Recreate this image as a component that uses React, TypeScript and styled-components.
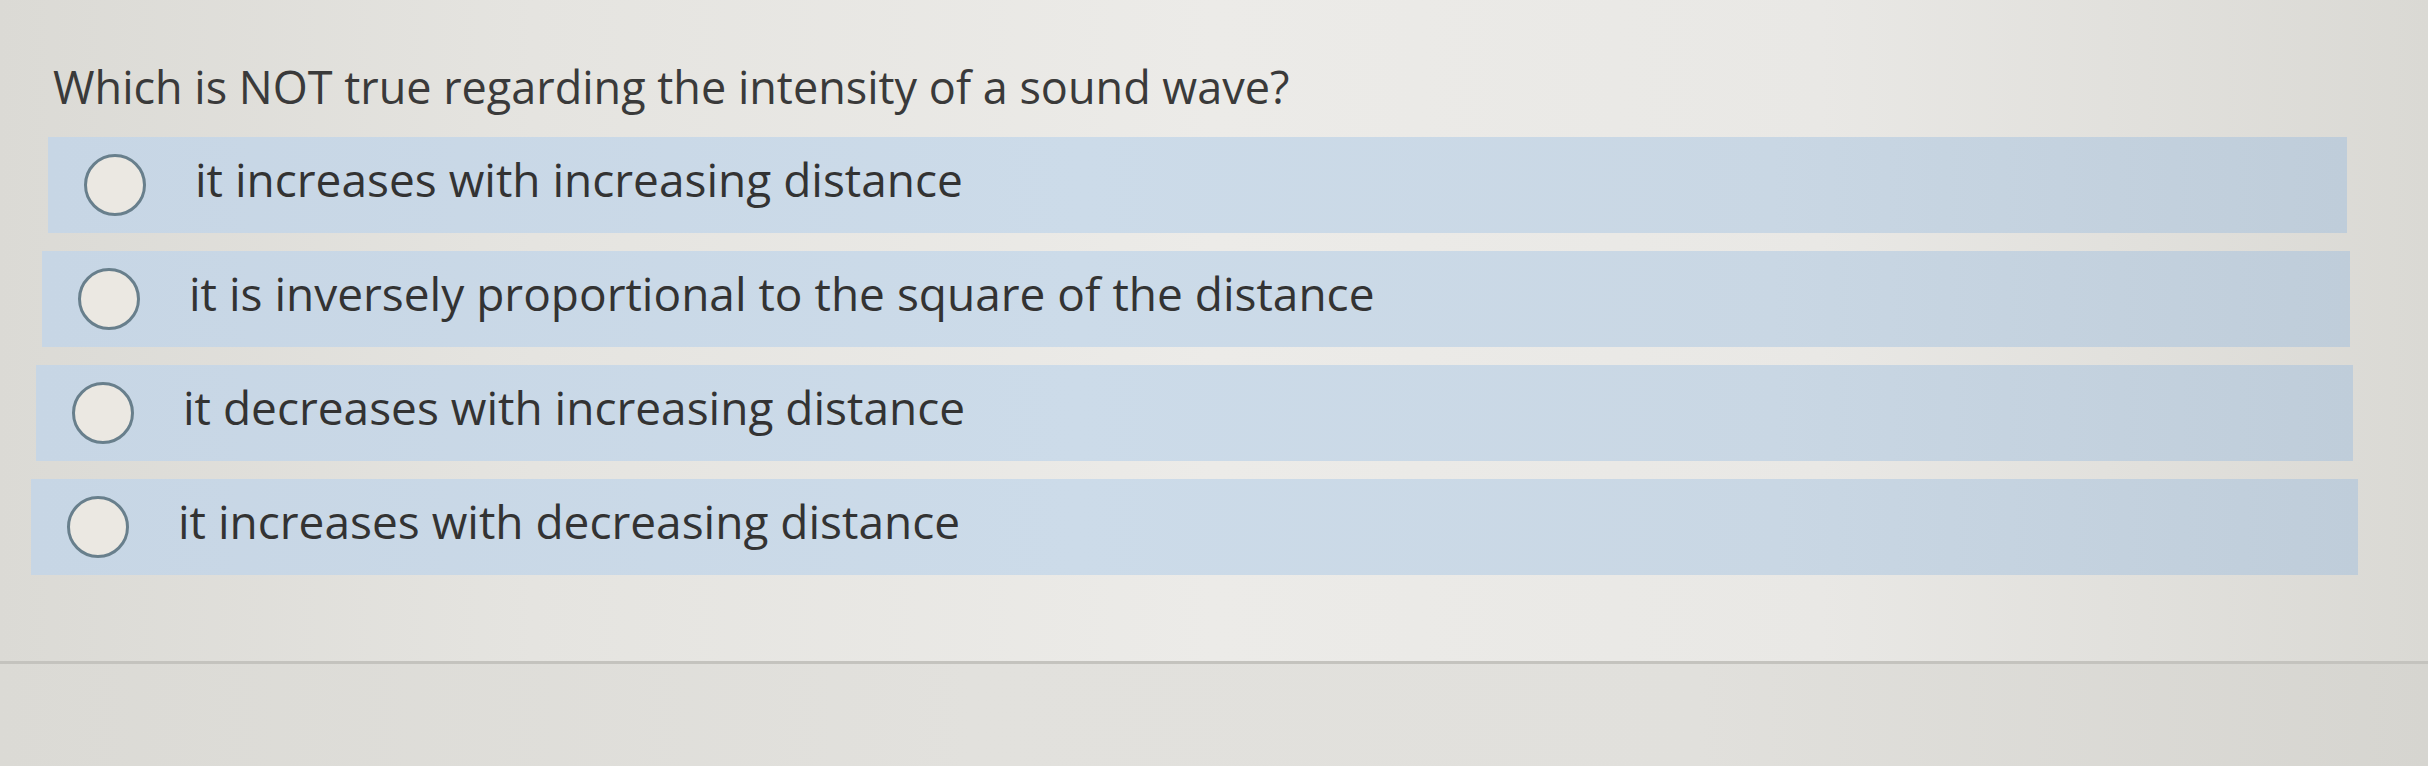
import styled, { createGlobalStyle } from 'styled-components';

const GlobalStyle = createGlobalStyle`
  html, body {
    margin: 0;
    padding: 0;
  }
  body {
    background: #e3e2dd;
    font-family: 'Open Sans', 'Noto Sans', sans-serif;
  }
`;

const Page = styled.div`
  width: 2428px;
  height: 766px;
  display: flex;
  flex-direction: column;
  background: linear-gradient(
    90deg,
    #dbdad5 0%,
    #e5e4e0 22%,
    #ecebe8 50%,
    #e9e8e5 75%,
    #dad9d4 100%
  );
  overflow: hidden;
`;

const QuestionPanel = styled.section`
  height: 664px;
  box-sizing: border-box;
  padding: 60px 76px 0 40px;
  border-bottom: 3px solid #c4c3be;
  display: flex;
  flex-direction: column;
`;

const Prompt = styled.h2`
  margin: 0 0 23px 13px;
  font-size: 45px;
  font-weight: 400;
  line-height: 54px;
  color: #3a3a3a;
  white-space: nowrap;
`;

const OptionList = styled.ul`
  list-style: none;
  margin: 0;
  padding: 0;
  display: flex;
  flex-direction: column;
  gap: 18px;
`;

const OptionRow = styled.li<{ $left: number; $right: number }>`
  height: 96px;
  margin-left: ${(p) => p.$left}px;
  margin-right: ${(p) => p.$right}px;
  display: flex;
  align-items: center;
  gap: 49px;
  padding-left: 36px;
  background: linear-gradient(90deg, #c7d6e5 0%, #ccdbe9 45%, #c9d7e4 75%, #bfcdda 100%);
`;

const Radio = styled.span`
  width: 62px;
  height: 62px;
  box-sizing: border-box;
  border-radius: 50%;
  border: 3px solid #687f8c;
  background: #ebe8e2;
  flex-shrink: 0;
`;

const OptionText = styled.span`
  font-size: 46px;
  line-height: 54px;
  color: #333333;
  padding-bottom: 12px;
  white-space: nowrap;
`;

const Footer = styled.div`
  flex: 1;
  background: linear-gradient(90deg, #dbdad5 0%, #e2e1dd 40%, #e1e0dc 70%, #d6d5d0 100%);
`;

const options = [
  { text: 'it increases with increasing distance', left: 8, right: 5 },
  { text: 'it is inversely proportional to the square of the distance', left: 2, right: 2 },
  { text: 'it decreases with increasing distance', left: -4, right: -1 },
  { text: 'it increases with decreasing distance', left: -9, right: -6 },
];

export default function App() {
  return (
    <>
      <GlobalStyle />
      <Page>
        <QuestionPanel>
          <Prompt>Which is NOT true regarding the intensity of a sound wave?</Prompt>
          <OptionList>
            {options.map((o) => (
              <OptionRow key={o.text} $left={o.left} $right={o.right}>
                <Radio />
                <OptionText>{o.text}</OptionText>
              </OptionRow>
            ))}
          </OptionList>
        </QuestionPanel>
        <Footer />
      </Page>
    </>
  );
}
